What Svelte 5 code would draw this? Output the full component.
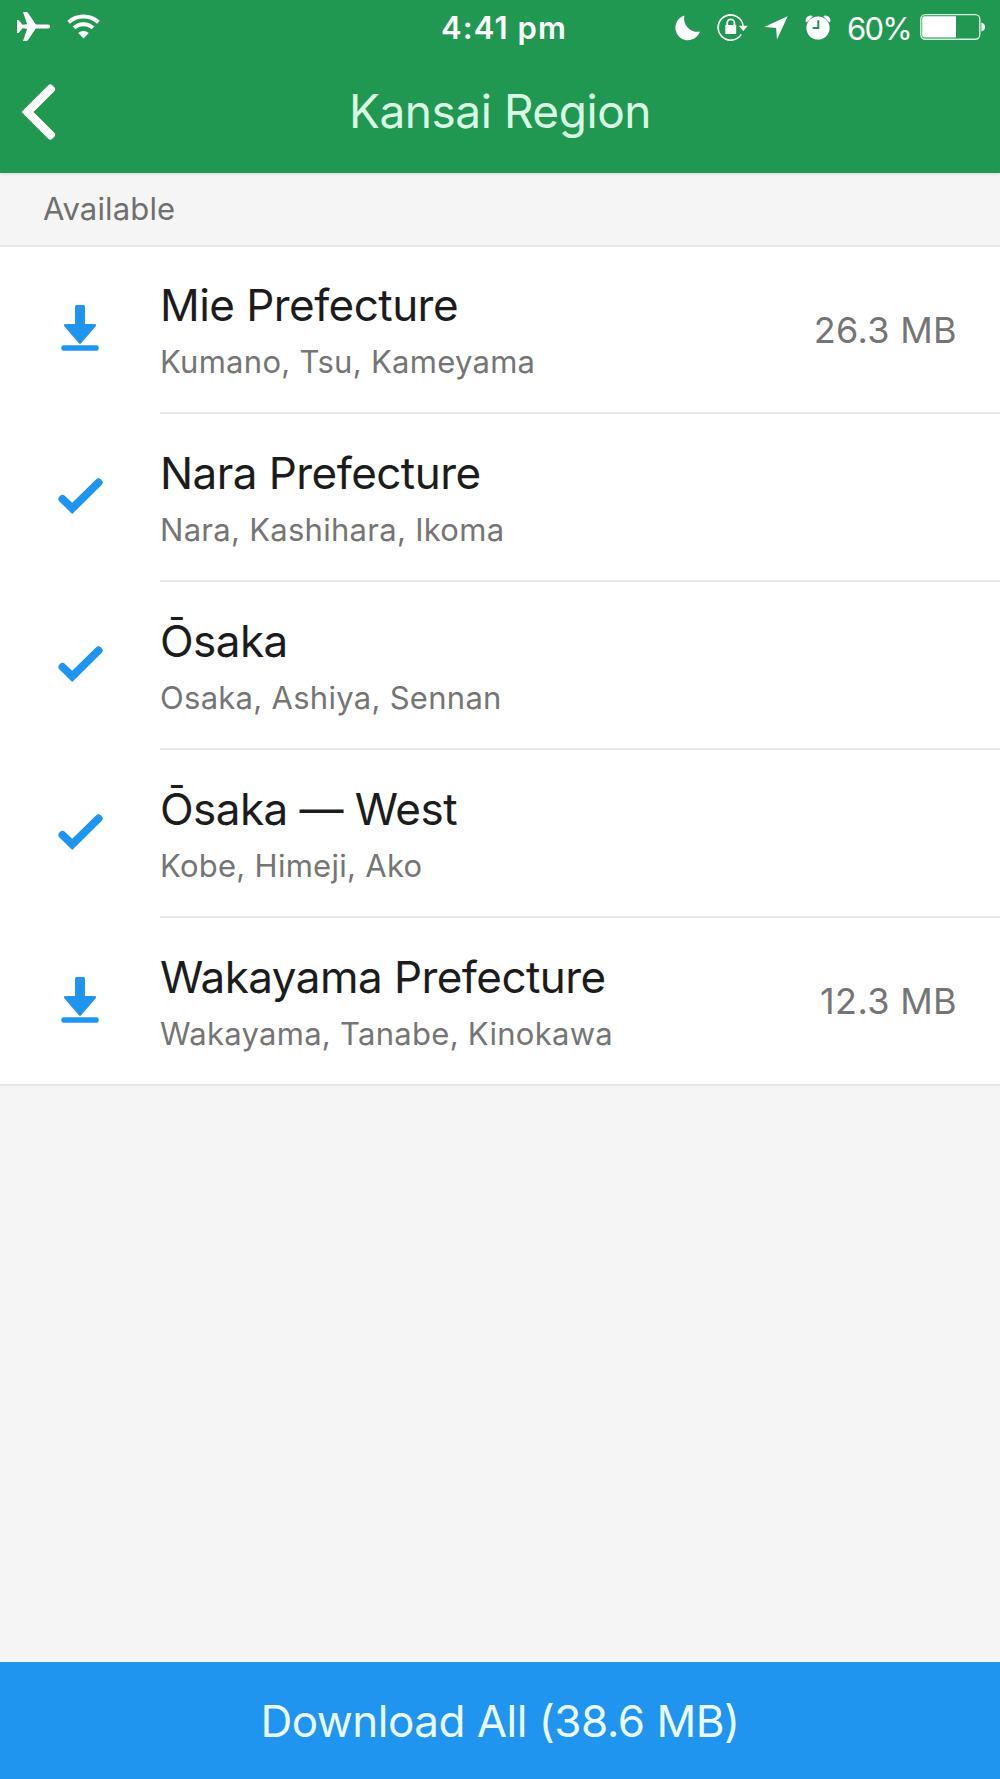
<script lang="ts">
	type Region = { name: string; cities: string; size?: string };

	const regions: Region[] = [
		{ name: 'Mie Prefecture', cities: 'Kumano, Tsu, Kameyama', size: '26.3 MB' },
		{ name: 'Nara Prefecture', cities: 'Nara, Kashihara, Ikoma' },
		{ name: 'Ōsaka', cities: 'Osaka, Ashiya, Sennan' },
		{ name: 'Ōsaka — West', cities: 'Kobe, Himeji, Ako' },
		{ name: 'Wakayama Prefecture', cities: 'Wakayama, Tanabe, Kinokawa', size: '12.3 MB' }
	];
</script>

<div class="screen">
	<header>
		<div class="status">
			<div class="left">
				<svg class="plane" width="34" height="30" viewBox="0 0 34 30">
					<path
						d="M6 0h3.600q.8 0 1.300.8L18.800 12.500H31q2.200.2 2.200 2T31 16.500H18.800L10.900 28.200q-.5.8-1.300.8H6l4.200-12.300-4.700-.4L1.600 21H0V8h1.600l3.900 4.700 4.700-.4z"
					/>
				</svg>
				<svg class="wifi" width="34" height="26" viewBox="0 0 34 26">
					<path class="line" d="M1.600 8.200a22 22 0 0 1 29.800 0M7 13.900a14 14 0 0 1 19 0" />
					<path d="M16.500 24.400l-5.300-5.500a8 8 0 0 1 10.600 0z" />
				</svg>
			</div>
			<span class="time">4:41 pm</span>
			<div class="right">
				<svg class="moon" width="26" height="26" viewBox="0 0 26 26">
					<path d="M9.500.500A12.600 12.600 0 1 0 25 16.400 13 13 0 0 1 9.500.500z" />
				</svg>
				<svg class="lock" width="32" height="28" viewBox="0 0 32 28">
					<path class="ring" d="M24.300 21.400A12.600 12.600 0 1 1 26.200 13" />
					<path d="M21.800 12.800h9L26.300 18z" />
					<path d="M8.300 12h10.900v9H8.300z" />
					<path class="shackle" d="M10.200 12.500V10a3.600 3.600 0 0 1 7.200 0v2.500" />
				</svg>
				<svg class="arrow" width="24" height="24" viewBox="0 0 24 24">
					<path d="M23.700.200L13 23.500l-.9-11.400L.200 11z" />
				</svg>
				<svg class="alarm" width="26" height="26" viewBox="0 0 26 26">
					<circle cx="13" cy="13" r="11.600" />
					<path d="M.700 6.600A5 5 0 0 1 6.800.700q1.200.300.500 1.100L2.300 6.800Q1.200 8 .700 6.600z" />
					<path d="M25.300 6.600A5 5 0 0 0 19.200.700q-1.200.300-.5 1.100l5 5q1.100 1.200 1.600-.2z" />
					<path class="hands" d="M13.300 5.300v7.800H7.600" />
				</svg>
				<span class="percent">60%</span>
				<svg class="battery" width="66" height="28" viewBox="0 0 66 28">
					<rect class="shell" x=".8" y="1.600" width="59" height="24.600" rx="4.500" />
					<path d="M4.500 3.200H36v21.400H4.500q-2.300 0-2.300-2.300V5.500q0-2.300 2.300-2.300z" />
					<path d="M61.400 9.500q3.600 1 3.600 4.500t-3.600 4.500z" />
				</svg>
			</div>
		</div>
		<nav>
			<button class="back" aria-label="Back">
				<svg width="36" height="58" viewBox="0 0 36 58">
					<path
						d="M.500 29L27.300 2.200q2-2 4 0l2 2q2 2 0 4L12.500 29l20.800 20.800q2 2 0 4l-2 2q-2 2-4 0z"
					/>
				</svg>
			</button>
			<h1>Kansai Region</h1>
		</nav>
	</header>

	<h2>Available</h2>

	<ul>
		{#each regions as region}
			<li>
				<div class="icon">
					<svg width="48" height="48" viewBox="0 0 48 48">
						{#if region.size}
							<path
								d="M20.500 0h7q1.500 0 1.500 1.500V19h9.500q2.500.4 1 2.500L24 39.600 8.500 21.500q-1.500-2.100 1-2.500H19V1.500Q19 0 20.500 0z"
							/>
							<rect x="5.300" y="40.300" width="37.400" height="5.400" rx="2.500" />
						{:else}
							<path class="check" d="M6.500 26l9.700 9.400L42.500 9.500" />
						{/if}
					</svg>
				</div>
				<div class="body">
					<div class="names">
						<div class="name">{region.name}</div>
						<div class="cities">{region.cities}</div>
					</div>
					{#if region.size}
						<span class="size">{region.size}</span>
					{/if}
				</div>
			</li>
		{/each}
	</ul>

	<button class="download">Download All (38.6 MB)</button>
</div>

<style>
	:global(body) {
		margin: 0;
	}
	.screen {
		display: flex;
		flex-direction: column;
		width: 1000px;
		height: 1779px;
		background: #f5f5f5;
		font-family: Inter, 'Liberation Sans', sans-serif;
	}
	svg {
		display: block;
		flex: none;
	}
	button {
		border: 0;
		padding: 0;
		font-family: inherit;
	}
	header {
		height: 173px;
		flex: none;
		background: #219851;
		color: #fff;
		fill: #fff;
		box-shadow: 0 1px 3px rgba(0, 0, 0, 0.12);
	}
	.status {
		display: grid;
		grid-template-columns: 1fr auto 1fr;
		height: 50px;
		box-sizing: border-box;
		padding: 0 14px 0 17px;
	}
	.left,
	.right {
		display: flex;
		align-items: flex-start;
	}
	.right {
		justify-content: flex-end;
	}
	.plane {
		margin-top: 12px;
	}
	.wifi {
		margin: 14px 0 0 16px;
	}
	.line {
		fill: none;
		stroke: #fff;
		stroke-width: 4;
	}
	.time {
		padding-left: 5px;
		font-size: 31px;
		font-weight: 600;
		line-height: 56px;
		letter-spacing: 1.1px;
	}
	.moon {
		margin: 15px 16px 0 0;
	}
	.lock {
		margin: 13px 15px 0 0;
	}
	.ring {
		fill: none;
		stroke: #fff;
		stroke-width: 1.6;
	}
	.shackle {
		fill: none;
		stroke: #fff;
		stroke-width: 1.8;
	}
	.arrow {
		margin: 16px 17px 0 0;
	}
	.alarm {
		margin: 15px 16px 0 0;
	}
	.hands {
		fill: none;
		stroke: #219851;
		stroke-width: 2;
	}
	.percent {
		font-size: 31px;
		font-weight: 400;
		line-height: 57px;
		letter-spacing: -1.7px;
		margin-right: 9px;
	}
	.battery {
		margin-top: 13px;
	}
	.shell {
		fill: none;
		stroke: #d3f3de;
		stroke-width: 1.4;
	}
	nav {
		display: grid;
		grid-template-columns: 1fr auto 1fr;
		align-items: center;
		height: 123px;
	}
	.back {
		justify-self: start;
		margin-left: 21px;
		background: none;
		fill: #fff;
	}
	h1 {
		margin: 0 0 1px;
		color: #d9fbe3;
		font-size: 46px;
		font-weight: 400;
		letter-spacing: -0.45px;
	}
	h2 {
		flex: none;
		box-sizing: border-box;
		height: 74px;
		margin: 0;
		padding-left: 43px;
		border-bottom: 2px solid #e9e9e9;
		color: #6f6f6f;
		font-size: 31px;
		font-weight: 400;
		line-height: 71px;
		letter-spacing: 0.15px;
	}
	ul {
		list-style: none;
		margin: 0;
		padding: 0;
		background: #fff;
	}
	li {
		display: flex;
		height: 168px;
	}
	.icon {
		display: flex;
		justify-content: center;
		width: 160px;
		box-sizing: border-box;
		padding-top: 59px;
		fill: #1f95ef;
	}
	.check {
		fill: none;
		stroke: #1f95ef;
		stroke-width: 8;
		stroke-linecap: round;
	}
	.body {
		flex: 1;
		display: flex;
		justify-content: space-between;
		align-items: center;
		box-sizing: border-box;
		padding-right: 43px;
		border-bottom: 2px solid #e9e9e9;
	}
	.names {
		align-self: flex-start;
		padding-top: 31px;
	}
	li:first-child {
		height: 167px;
	}
	li:first-child .icon {
		padding-top: 58px;
	}
	li:first-child .names {
		padding-top: 30px;
	}
	li:last-child {
		box-sizing: border-box;
		border-bottom: 2px solid #e6e6e6;
	}
	li:last-child .body {
		border-bottom: 0;
	}
	.name {
		color: #1c1c1c;
		font-size: 44px;
		line-height: 56px;
		letter-spacing: -0.55px;
	}
	.cities {
		margin-top: 9px;
		color: #757575;
		font-size: 31px;
		line-height: 40px;
		letter-spacing: 0.28px;
	}
	.size {
		color: #757575;
		font-size: 36px;
		letter-spacing: 0.35px;
	}
	.download {
		flex: none;
		height: 117px;
		margin-top: auto;
		background: #1f95ef;
		color: #ebfaff;
		font-size: 44px;
		font-weight: 400;
		letter-spacing: -0.5px;
	}
</style>
